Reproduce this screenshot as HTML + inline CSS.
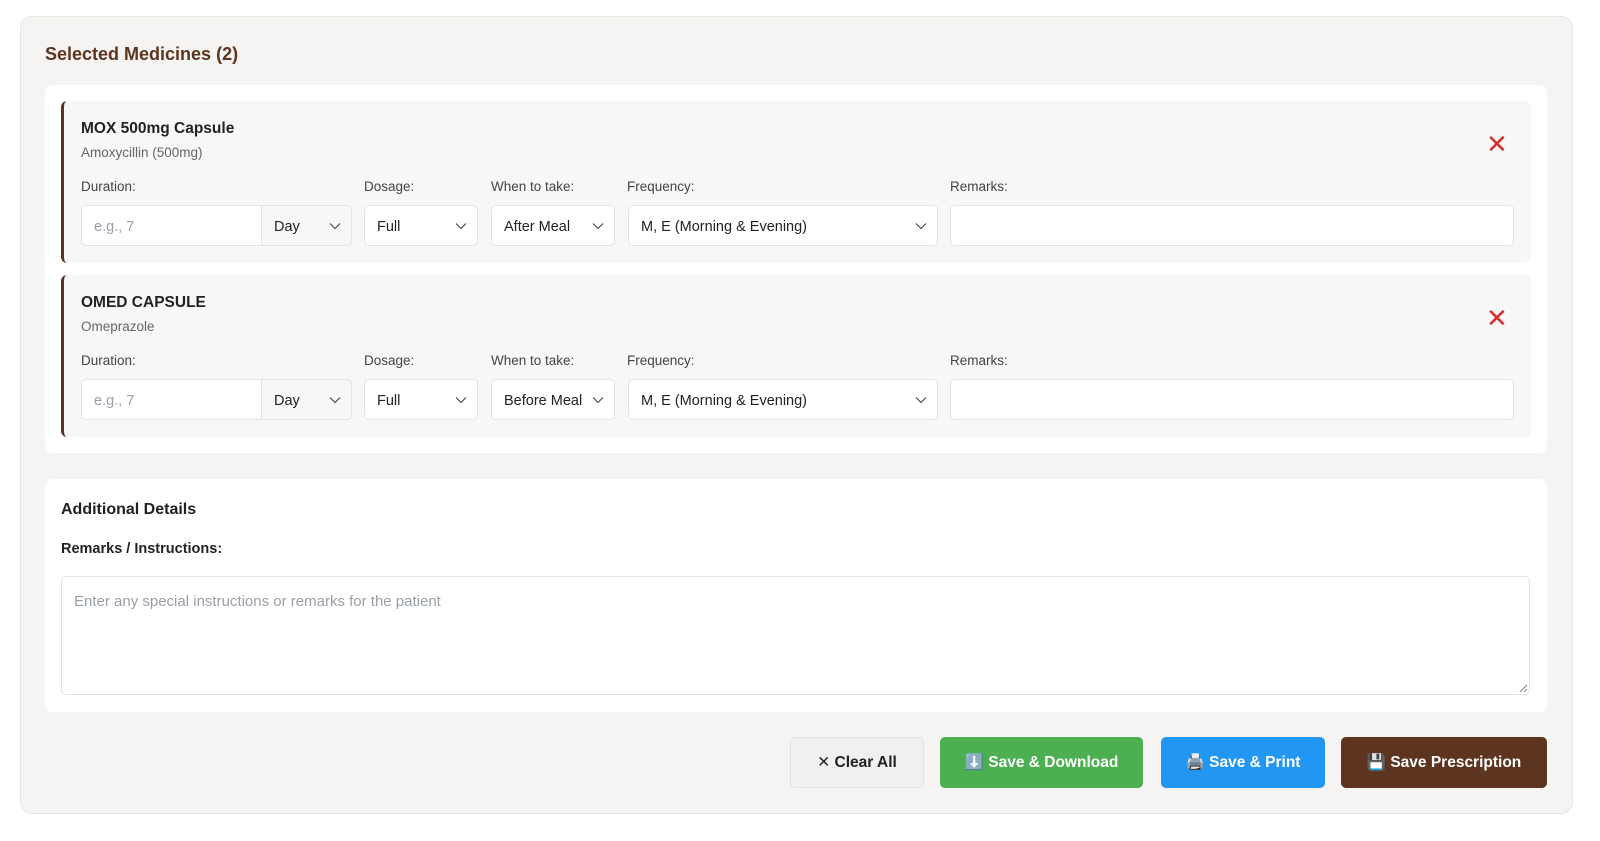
<!DOCTYPE html>
<html><head><meta charset="utf-8"><style>
*{box-sizing:border-box;margin:0;padding:0}
body{width:1600px;height:841px;background:#fff;font-family:"Liberation Sans",sans-serif;color:#222;position:relative;overflow:hidden}
.abs{position:absolute}
.outer{left:20px;top:16px;width:1553px;height:798px;background:#f5f4f2;border:1px solid #e8e6e3;border-radius:12px}
.h1{left:45px;top:44px;font-size:18px;font-weight:bold;color:#5c3420}
.white{background:#fff;border-radius:8px}
.card{left:61px;width:1470px;height:162px;background:#f7f7f7;border-left:3px solid #5c3420;border-radius:6px}
.title{font-size:15.5px;font-weight:bold;color:#222}
.sub{font-size:13.5px;color:#666}
.lbl{font-size:13.5px;color:#444}
.inp{background:#fff;border:1px solid #e3e3e3;border-radius:5px;height:41px;font-size:14.5px;color:#222;padding-left:12px;line-height:42px}
.ph{color:#9aa0a8}
.chev{position:absolute;right:10px;top:16px;width:12px;height:8px}
.x{font-size:26px;color:#d32f2f;line-height:1}
.btn{top:737px;height:51px;border-radius:5px;font-size:15.5px;font-weight:bold;color:#fff;text-align:center;line-height:51px}
</style></head><body>
<div class="abs outer"></div>
<div class="abs h1">Selected Medicines (2)</div>
<div class="abs white" style="left:45px;top:85px;width:1502px;height:368px"></div>

<div class="abs card" style="top:101px"></div>
<div class="abs title" style="left:81px;top:120px">MOX 500mg Capsule</div>
<div class="abs sub" style="left:81px;top:145px">Amoxycillin (500mg)</div>
<div class="abs x" style="left:1486px;top:131px">✕</div>
<div class="abs lbl" style="left:81px;top:179px">Duration:</div>
<div class="abs lbl" style="left:364px;top:179px">Dosage:</div>
<div class="abs lbl" style="left:491px;top:179px">When to take:</div>
<div class="abs lbl" style="left:627px;top:179px">Frequency:</div>
<div class="abs lbl" style="left:950px;top:179px">Remarks:</div>
<div class="abs inp" style="left:81px;top:205px;width:271px"><span class="ph">e.g., 7</span></div>
<div class="abs inp" style="left:261px;top:205px;width:91px;background:#f7f7f7;border-radius:0 5px 5px 0">Day<svg class="chev" viewBox="0 0 12 8"><path d="M1 1.5l5 5 5-5" fill="none" stroke="#444" stroke-width="1.1"/></svg></div>
<div class="abs inp" style="left:364px;top:205px;width:114px">Full<svg class="chev" viewBox="0 0 12 8"><path d="M1 1.5l5 5 5-5" fill="none" stroke="#444" stroke-width="1.1"/></svg></div>
<div class="abs inp" style="left:491px;top:205px;width:124px">After Meal<svg class="chev" viewBox="0 0 12 8"><path d="M1 1.5l5 5 5-5" fill="none" stroke="#444" stroke-width="1.1"/></svg></div>
<div class="abs inp" style="left:628px;top:205px;width:310px">M, E (Morning &amp; Evening)<svg class="chev" viewBox="0 0 12 8"><path d="M1 1.5l5 5 5-5" fill="none" stroke="#444" stroke-width="1.1"/></svg></div>
<div class="abs inp" style="left:950px;top:205px;width:564px"></div>

<div class="abs card" style="top:275px"></div>
<div class="abs title" style="left:81px;top:294px">OMED CAPSULE</div>
<div class="abs sub" style="left:81px;top:319px">Omeprazole</div>
<div class="abs x" style="left:1486px;top:305px">✕</div>
<div class="abs lbl" style="left:81px;top:353px">Duration:</div>
<div class="abs lbl" style="left:364px;top:353px">Dosage:</div>
<div class="abs lbl" style="left:491px;top:353px">When to take:</div>
<div class="abs lbl" style="left:627px;top:353px">Frequency:</div>
<div class="abs lbl" style="left:950px;top:353px">Remarks:</div>
<div class="abs inp" style="left:81px;top:379px;width:271px"><span class="ph">e.g., 7</span></div>
<div class="abs inp" style="left:261px;top:379px;width:91px;background:#f7f7f7;border-radius:0 5px 5px 0">Day<svg class="chev" viewBox="0 0 12 8"><path d="M1 1.5l5 5 5-5" fill="none" stroke="#444" stroke-width="1.1"/></svg></div>
<div class="abs inp" style="left:364px;top:379px;width:114px">Full<svg class="chev" viewBox="0 0 12 8"><path d="M1 1.5l5 5 5-5" fill="none" stroke="#444" stroke-width="1.1"/></svg></div>
<div class="abs inp" style="left:491px;top:379px;width:124px">Before Meal<svg class="chev" viewBox="0 0 12 8"><path d="M1 1.5l5 5 5-5" fill="none" stroke="#444" stroke-width="1.1"/></svg></div>
<div class="abs inp" style="left:628px;top:379px;width:310px">M, E (Morning &amp; Evening)<svg class="chev" viewBox="0 0 12 8"><path d="M1 1.5l5 5 5-5" fill="none" stroke="#444" stroke-width="1.1"/></svg></div>
<div class="abs inp" style="left:950px;top:379px;width:564px"></div>

<div class="abs white" style="left:45px;top:479px;width:1502px;height:233px"></div>
<div class="abs" style="left:61px;top:501px;font-size:16px;font-weight:bold;color:#222">Additional Details</div>
<div class="abs" style="left:61px;top:541px;font-size:14.5px;font-weight:bold;color:#222">Remarks / Instructions:</div>
<div class="abs" style="left:61px;top:576px;width:1469px;height:119px;border:1px solid #e3e3e3;border-radius:5px;padding:16px 12px;font-size:15px;color:#9aa0a8">Enter any special instructions or remarks for the patient</div>
<svg class="abs" style="left:1519px;top:684px" width="9" height="9" viewBox="0 0 9 9"><path d="M1 8L8 1M5 8L8 5" stroke="#888" stroke-width="1"/></svg>

<div class="abs btn" style="left:790px;width:134px;background:#f0f0f0;border:1px solid #e2e2e2;color:#222;line-height:49px"><span style="font-weight:normal">✕</span> Clear All</div>
<div class="abs btn" style="left:940px;width:203px;background:#4caf50">⬇️ Save &amp; Download</div>
<div class="abs btn" style="left:1161px;width:164px;background:#2196f3">🖨️ Save &amp; Print</div>
<div class="abs btn" style="left:1341px;width:206px;background:#5c3420">💾 Save Prescription</div>
</body></html>
